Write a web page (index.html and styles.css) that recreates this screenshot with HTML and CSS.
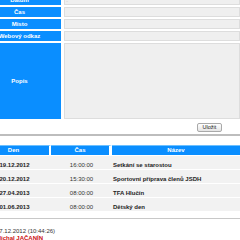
FILE: index.html
```html
<!DOCTYPE html>
<html lang="cs">
<head>
<meta charset="utf-8">
<title>Akce</title>
<link rel="stylesheet" href="styles.css">
</head>
<body>
<div class="page">
  <div class="form">
    <div class="lbl">Datum</div><div class="inp"><span class="ph">..</span></div>
    <div class="lbl">Čas</div><div class="inp"></div>
    <div class="lbl">Misto</div><div class="inp"></div>
    <div class="lbl">Webový odkaz</div><div class="inp"></div>
    <div class="lbl">Popis</div><div class="inp"></div>
  </div>
  <div class="actions"><button class="btn" type="button">Uložit</button></div>
  <div class="sep"></div>
  <table class="events">
    <colgroup><col class="c-den"><col class="c-cas"><col class="c-nazev"></colgroup>
    <thead>
      <tr><th>Den</th><th>Čas</th><th class="last">Název</th></tr>
    </thead>
    <tbody>
      <tr><td class="den">19.12.2012</td><td class="cas">16:00:00</td><td class="nazev">Setkání se starostou</td></tr>
      <tr><td class="den">20.12.2012</td><td class="cas">15:30:00</td><td class="nazev">Sportovní příprava členů JSDH</td></tr>
      <tr><td class="den">27.04.2013</td><td class="cas">08:00:00</td><td class="nazev">TFA Hlučín</td></tr>
      <tr><td class="den">01.06.2013</td><td class="cas">08:00:00</td><td class="nazev">Dětský den</td></tr>
    </tbody>
  </table>
  <div class="rule"></div>
  <div class="foot">
    <div class="stamp">17.12.2012 (10:44:26)</div>
    <div class="author">Michal JAČANÍN</div>
  </div>
</div>
</body>
</html>
```
FILE: styles.css
```css
html, body {
  margin: 0;
  padding: 0;
  background: #fff;
  overflow: hidden;
}
.page {
  margin: -5px 0 0 -22px;
  width: 262px;
  font-family: "Liberation Sans", Arial, sans-serif;
  font-size: 6px;
  color: #222;
}
.form {
  display: grid;
  grid-template-columns: 83px 176px;
  grid-template-rows: 10px 10px 10px 10px 76px;
  column-gap: 3px;
  row-gap: 2px;
}
.lbl {
  background: #0a8eff;
  color: #fff;
  font-weight: bold;
  display: flex;
  align-items: center;
  justify-content: center;
}
.inp {
  background: #efefef;
  border: 1px solid #dddddd;
  box-sizing: border-box;
  display: flex;
  align-items: center;
  padding-left: 1px;
}
.ph {
  color: #aaa;
  font-size: 4px;
}
.actions {
  display: flex;
  justify-content: flex-end;
  padding-right: 18px;
  margin-top: 4px;
}
.btn {
  font-family: "Liberation Sans", Arial, sans-serif;
  font-size: 5.5px;
  height: 9px;
  width: 25px;
  padding: 0;
  border: 1px solid #a9a9a9;
  border-radius: 2px;
  background: linear-gradient(#ffffff, #e4e4e4);
  color: #222;
  line-height: 7px;
}
.sep {
  margin-top: 2px;
  height: 2px;
  background: #bdbdbd;
}
.events {
  margin-top: 9px;
  width: 262px;
  table-layout: fixed;
  border-collapse: separate;
  border-spacing: 0;
}
.c-den { width: 73px; }
.c-cas { width: 61px; }
.c-nazev { width: 128px; }
.events th {
  background: #0a8eff;
  color: #fff;
  font-weight: bold;
  height: 9px;
  padding: 0;
  line-height: 9px;
  border-top: 1px solid #6cc0ff;
  border-right: 2px solid #fff;
  text-align: center;
}
.events th:nth-child(2) { border-right-width: 3px; }
.events th.last { border-right: 0; }
.events td {
  background: #f2f2f2;
  height: 14px;
  padding: 6px 0 0 0;
  box-sizing: border-box;
  border-top: 1px solid #fff;
  line-height: 7px;
  vertical-align: top;
}
.den {
  font-weight: bold;
  text-align: center;
}
.cas {
  text-align: center;
  color: #333;
}
.nazev {
  font-weight: bold;
  padding-left: 1px !important;
}
.rule {
  margin-top: 7px;
  height: 1px;
  background: #c8c8c8;
}
.foot {
  padding: 9px 0 0 18px;
  line-height: 7px;
}
.stamp { color: #333; }
.author {
  color: #cc1010;
  font-weight: bold;
}
```
